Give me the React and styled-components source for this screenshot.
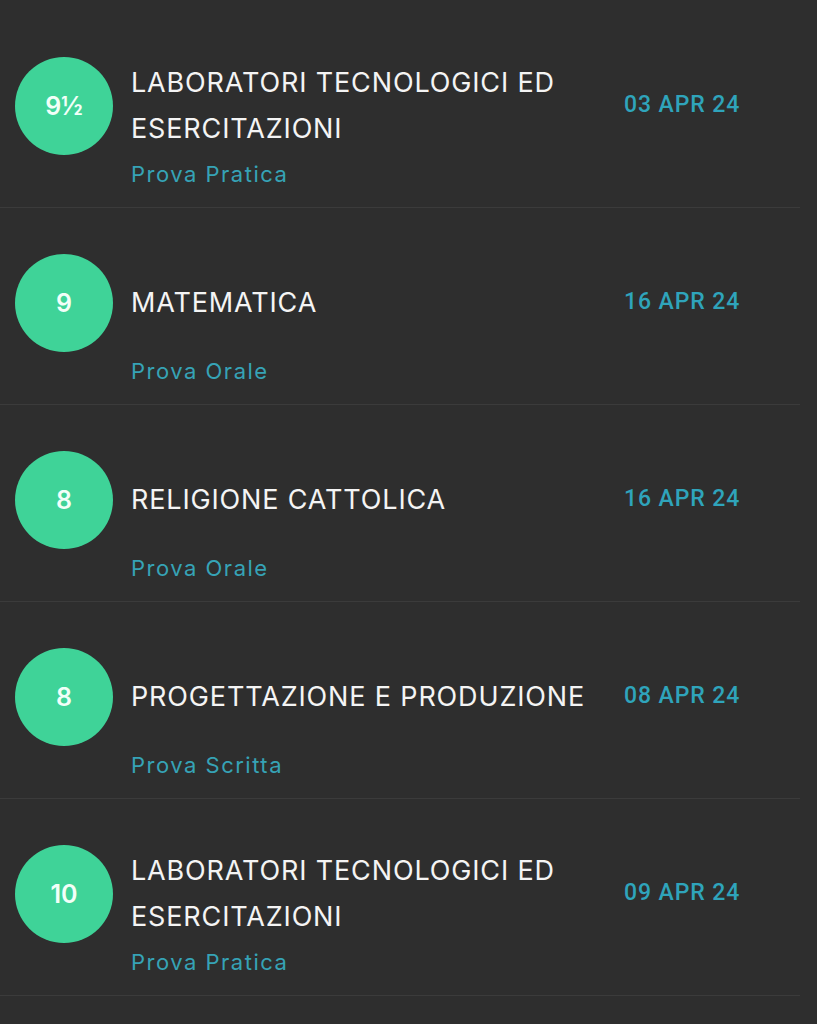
import React from "react";
import styled, { createGlobalStyle } from "styled-components";

const GlobalStyle = createGlobalStyle`
  html, body {
    margin: 0;
    padding: 0;
    background-color: #2e2e2e;
  }
  body {
    font-family: "Inter", "Liberation Sans", sans-serif;
  }
`;

const List = styled.div`
  padding-top: 11px;
  width: 800px;
`;

const Row = styled.div`
  display: grid;
  grid-template-columns: 98px 475px 176px;
  grid-template-rows: 98px auto;
  column-gap: 18px;
  align-items: center;
  padding: 46px 0 17px 15px;
  border-bottom: 1px solid #3b3b3b;
`;

const Grade = styled.div`
  width: 98px;
  height: 98px;
  border-radius: 50%;
  background-color: #3fd398;
  color: #f2fff8;
  display: flex;
  align-items: center;
  justify-content: center;
  font-family: "Inter", sans-serif;
  font-size: 25px;
  font-weight: 600;
`;

const Title = styled.div`
  color: #f4f4f4;
  font-size: 27px;
  font-weight: 400;
  line-height: 46px;
  letter-spacing: 0.85px;
`;

const DateLabel = styled.div`
  color: #2fa4bb;
  font-family: "Roboto", sans-serif;
  font-size: 23px;
  font-weight: 500;
  letter-spacing: 0.9px;
  margin-top: -3px;
`;

const Kind = styled.div`
  grid-column: 2;
  margin-top: 3px;
  color: #36a3b6;
  font-size: 22px;
  line-height: 32px;
  letter-spacing: 1.5px;
`;

const grades = [
  { grade: "9½", title: ["LABORATORI TECNOLOGICI ED", "ESERCITAZIONI"], kind: "Prova Pratica", date: "03 APR 24" },
  { grade: "9", title: ["MATEMATICA"], kind: "Prova Orale", date: "16 APR 24" },
  { grade: "8", title: ["RELIGIONE CATTOLICA"], kind: "Prova Orale", date: "16 APR 24" },
  { grade: "8", title: ["PROGETTAZIONE E PRODUZIONE"], kind: "Prova Scritta", date: "08 APR 24" },
  { grade: "10", title: ["LABORATORI TECNOLOGICI ED", "ESERCITAZIONI"], kind: "Prova Pratica", date: "09 APR 24" },
];

export default function App() {
  return (
    <>
      <GlobalStyle />
      <List>
        {grades.map((item, index) => (
          <Row key={index}>
            <Grade>{item.grade}</Grade>
            <Title>
              {item.title.map((line) => (
                <div key={line}>{line}</div>
              ))}
            </Title>
            <DateLabel>{item.date}</DateLabel>
            <Kind>{item.kind}</Kind>
          </Row>
        ))}
      </List>
    </>
  );
}
